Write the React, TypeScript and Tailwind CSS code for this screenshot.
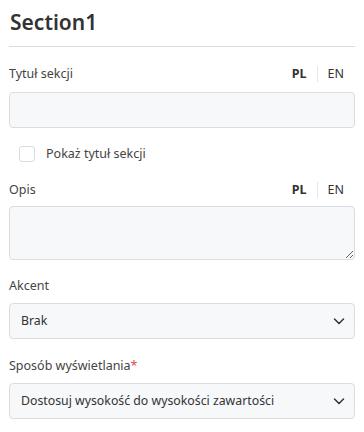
import React from 'react';

const Chevron = () => (
  <svg viewBox="0 0 12 12" className="w-[12px] h-[12px] text-[#333]" fill="none" stroke="currentColor" strokeWidth="1.5" strokeLinecap="round" strokeLinejoin="round">
    <path d="M1.5 4l4.5 4.5L10.5 4" />
  </svg>
);

const LangSwitch = () => (
  <div className="flex items-center text-[12.5px] text-[#333] pr-[11px]">
    <span className="font-bold">PL</span>
    <span className="mx-[10px] h-4 w-px bg-[#e5e7eb]" />
    <span>EN</span>
  </div>
);

const Select = ({ value }: { value: string }) => (
  <div className="h-[36px] rounded-[4px] border border-[#d9dce1] bg-[#f7f8fa] flex items-center justify-between pl-[11px] pr-[9px] text-[12.3px] text-[#333]">
    <span>{value}</span>
    <Chevron />
  </div>
);

export default function App() {
  return (
    <div className="w-[364px] h-[432px] bg-white px-[9px] pt-[6px] font-['Noto_Sans',sans-serif] text-[#444]">
      <h1 className="text-[21px] font-semibold text-[#333] leading-[32px] pl-px">Section1</h1>
      <div className="mt-[8px] h-px bg-[#d9dce1]" />

      <div className="mt-[17px] flex items-center justify-between h-[20px]">
        <label className="text-[12.5px]">Tytuł sekcji</label>
        <LangSwitch />
      </div>
      <div className="mt-[8px] h-[36px] rounded-[4px] border border-[#d9dce1] bg-[#f7f8fa]" />

      <div className="mt-[18px] ml-[10px] flex items-center gap-[11px] h-[16px]">
        <span className="w-[16px] h-[16px] rounded-[3px] border border-[#d9dce1] bg-white" />
        <span className="text-[12.5px]">Pokaż tytuł sekcji</span>
      </div>

      <div className="mt-[18px] flex items-center justify-between h-[20px]">
        <label className="text-[12.5px]">Opis</label>
        <LangSwitch />
      </div>
      <textarea className="mt-[6px] block w-full h-[54px] rounded-[4px] border border-[#d9dce1] bg-[#f7f8fa] resize-y outline-none" />

      <div className="mt-[16px] h-[20px] flex items-center">
        <label className="text-[12.5px]">Akcent</label>
      </div>
      <div className="mt-[7px]">
        <Select value="Brak" />
      </div>

      <div className="mt-[17px] h-[20px] flex items-center">
        <label className="text-[12.5px]">
          Sposób wyświetlania<span className="text-[#e5484d]">*</span>
        </label>
      </div>
      <div className="mt-[7px]">
        <Select value="Dostosuj wysokość do wysokości zawartości" />
      </div>
    </div>
  );
}
